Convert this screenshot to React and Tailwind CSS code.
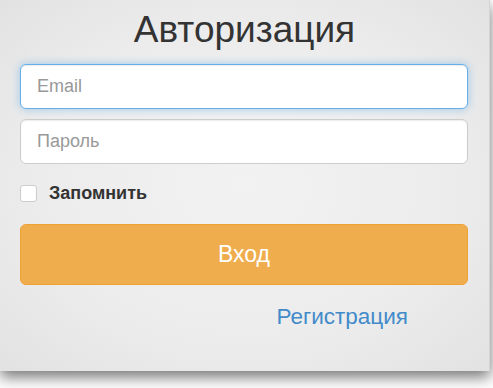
import React, { useState } from 'react';

const App = () => {
  const [remember, setRemember] = useState(false);

  return (
    <div className="w-[493px] h-[388px] bg-white overflow-hidden font-['Liberation_Sans',Arial,sans-serif]">
      {/* Card */}
      <div className="w-[490px] h-[371px] px-5 pt-[6px] bg-[radial-gradient(ellipse_at_center,#f2f2f2_0%,#ececec_60%,#e2e2e2_100%)] shadow-[0_6px_14px_rgba(0,0,0,0.55)] border-r border-[#d4d4d4]">
        <h1 className="text-center text-[37px] leading-[48px] text-[#333] mb-[10px]">Авторизация</h1>

        <div className="flex flex-col gap-[10px] w-[448px]">
          <input
            type="text"
            placeholder="Email"
            autoFocus
            className="h-[45px] px-4 text-[18px] text-[#555] bg-white rounded-[6px] border border-[#66afe9] shadow-[inset_0_1px_1px_rgba(0,0,0,0.075),0_0_8px_rgba(102,175,233,0.6)] outline-none placeholder:text-[#999]"
          />
          <input
            type="password"
            placeholder="Пароль"
            className="h-[45px] px-4 text-[18px] text-[#555] bg-white rounded-[6px] border border-[#ccc] shadow-[inset_0_1px_1px_rgba(0,0,0,0.075)] outline-none placeholder:text-[#999]"
          />
        </div>

        <label className="flex items-center gap-[12px] mt-[20px] h-[18px] cursor-pointer">
          <span
            onClick={() => setRemember(!remember)}
            className="w-[17px] h-[17px] rounded-[3px] bg-white border border-[#ccc]"
          />
          <span className="text-[18px] leading-[18px] font-bold text-[#333]">Запомнить</span>
        </label>

        <button className="mt-[22px] w-[448px] h-[61px] rounded-[6px] bg-[#f0ad4e] border border-[#eea236] text-white text-[23px]">
          Вход
        </button>

        <div className="flex justify-end pr-[61px] mt-[17px]">
          <a href="#" className="text-[#428bca] text-[22.5px] leading-[30px]">Регистрация</a>
        </div>
      </div>
    </div>
  );
};

export default App;
